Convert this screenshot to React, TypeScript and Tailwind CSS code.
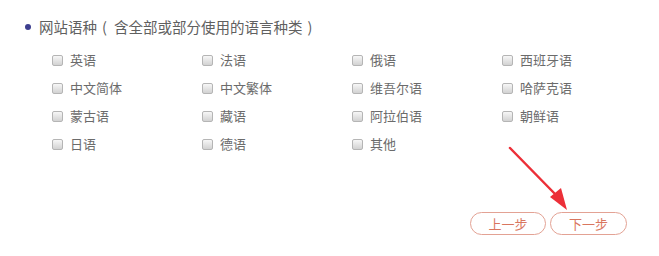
const languages = [
  '英语', '法语', '俄语', '西班牙语',
  '中文简体', '中文繁体', '维吾尔语', '哈萨克语',
  '蒙古语', '藏语', '阿拉伯语', '朝鲜语',
  '日语', '德语', '其他',
]

function Check({ label }: { label: string }) {
  return (
    <label className="flex h-[28px] items-center gap-[7px] text-[13px] text-[#6b6b6b]">
      <span className="block h-[11px] w-[11px] rounded-[2px] border border-[#b5b5b5] bg-gradient-to-b from-[#f7f7f7] to-[#d2d2d2]" />
      {label}
    </label>
  )
}

export default function App() {
  return (
    <div
      className="relative h-[256px] w-[659px] overflow-hidden bg-white"
      style={{ fontFamily: '"Noto Sans CJK SC", "Liberation Sans", sans-serif' }}
    >
      {/* Title */}
      <div className="mt-[17px] flex h-[20px] items-center pl-[25px] text-[14.5px] leading-[20px] text-[#606060]">
        <span className="mr-[8px] block h-[6px] w-[6px] rounded-full bg-[#3d3f8f]" />
        <span>网站语种</span>
        <span className="ml-[5px] mr-[7px]">(</span>
        <span>含全部或部分使用的语言种类</span>
        <span className="ml-[5px]">)</span>
      </div>

      {/* Options */}
      <div className="mt-[9px] grid grid-cols-[150px_150px_150px_150px] pl-[52px]">
        {languages.map((l) => (
          <Check key={l} label={l} />
        ))}
      </div>

      {/* Buttons */}
      <div className="mt-[54px] flex justify-end gap-[4px] pr-[32px]">
        <button className="flex h-[23px] w-[76px] items-center justify-center rounded-full border border-[#e3a294] text-[13px] text-[#d9765f]">
          上一步
        </button>
        <button className="flex h-[23px] w-[77px] items-center justify-center rounded-full border border-[#e3a294] text-[13px] text-[#d9765f]">
          下一步
        </button>
      </div>

      {/* Annotation arrow */}
      <svg className="absolute left-[505px] top-[144px]" width="70" height="72" viewBox="0 0 70 72">
        <line x1="5" y1="4" x2="52" y2="52" stroke="#ec2f38" strokeWidth="2.5" strokeLinecap="round" />
        <polygon points="62,66 45,53 56,44" fill="#ec2f38" />
      </svg>
    </div>
  )
}
